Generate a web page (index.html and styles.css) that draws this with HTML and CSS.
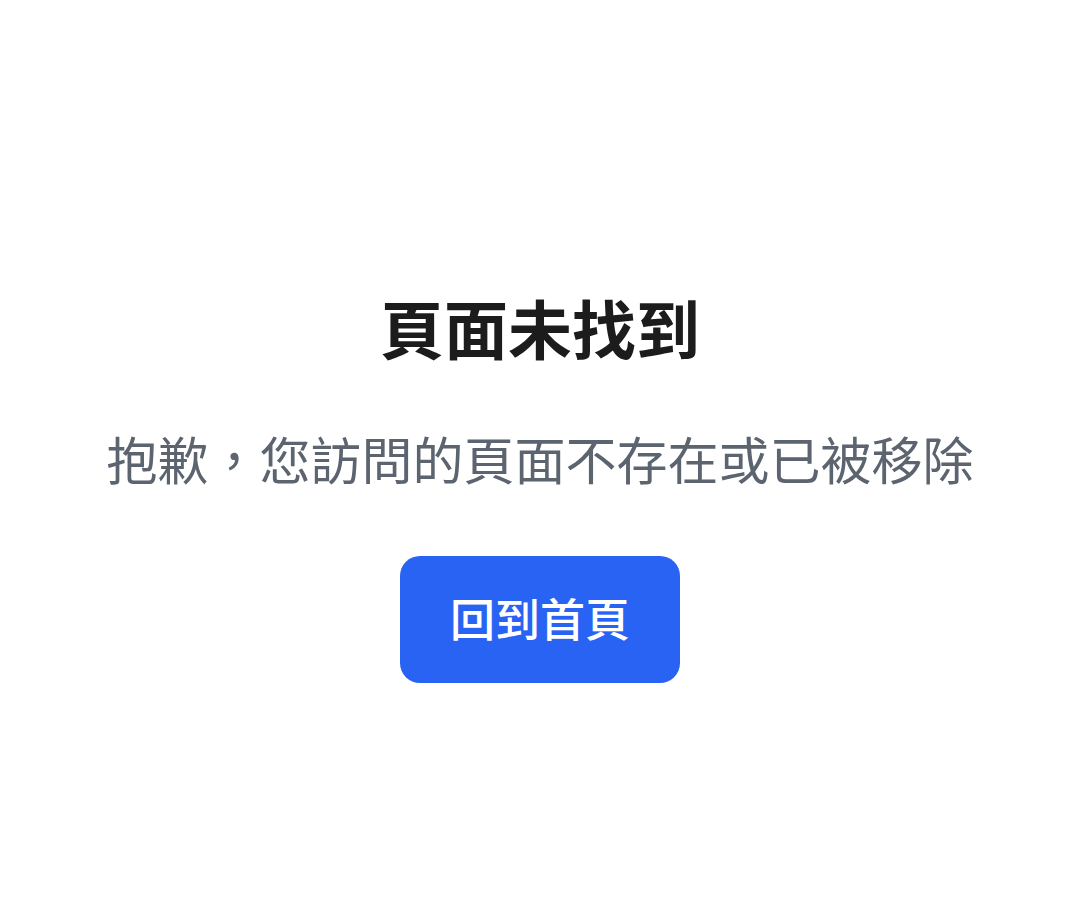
FILE: index.html
```html
<!DOCTYPE html>
<html lang="zh-Hant">
<head>
<meta charset="utf-8">
<title>頁面未找到</title>
<link rel="stylesheet" href="styles.css">
</head>
<body>
<main class="page">
  <h1 class="title">頁面未找到</h1>
  <p class="message">抱歉，您訪問的頁面不存在或已被移除</p>
  <a class="home-btn" href="#">回到首頁</a>
</main>
</body>
</html>
```
FILE: styles.css
```css
html, body {
  margin: 0;
  padding: 0;
  background: #ffffff;
}
body {
  font-family: "Noto Sans CJK TC", "Noto Sans", sans-serif;
  width: 1080px;
  height: 923px;
  overflow: hidden;
}
.page {
  display: flex;
  flex-direction: column;
  align-items: center;
  padding-top: 294px;
}
.title {
  margin: 0;
  font-size: 64px;
  line-height: 1;
  font-weight: 700;
  color: #1c1c1c;
}
.message {
  margin: 75px 0 0;
  font-size: 51px;
  line-height: 1;
  font-weight: 400;
  color: #5c6470;
}
.home-btn {
  margin-top: 72px;
  width: 280px;
  height: 127px;
  box-sizing: border-box;
  padding-bottom: 5px;
  display: flex;
  align-items: center;
  justify-content: center;
  background: #2863f4;
  border-radius: 20px;
  color: #ffffff;
  font-size: 45px;
  font-weight: 500;
  text-decoration: none;
}
```
